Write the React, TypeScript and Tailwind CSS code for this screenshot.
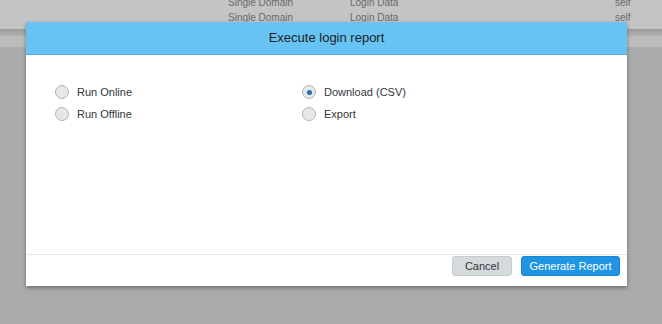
import React, { useState } from 'react';

const Radio: React.FC<{ label: string; checked: boolean; onClick: () => void }> = ({ label, checked, onClick }) => (
  <button onClick={onClick} className="flex items-center h-[22px] text-left">
    <span className="w-[14px] h-[14px] rounded-full border border-[#b3b3b3] bg-[#e5e7ea] flex items-center justify-center">
      {checked && <span className="w-[5px] h-[5px] rounded-full bg-[#2a6ab0]" />}
    </span>
    <span className="ml-[8px] text-[11px] text-[#32363a]">{label}</span>
  </button>
);

export default function App() {
  const [run, setRun] = useState<string | null>(null);
  const [out, setOut] = useState('csv');

  return (
    <div className="relative w-[662px] h-[324px] overflow-hidden bg-[#aaabad] font-['Liberation_Sans',Arial,sans-serif]">
      {/* Background page */}
      <div className="h-[29px] bg-[#c4c4c4] relative text-[10px] text-[#6a6a6a]">
        <div className="absolute left-[228px] top-[-5px]">Single Domain</div>
        <div className="absolute left-[350px] top-[-5px]">Login Data</div>
        <div className="absolute left-[615px] top-[-5px]">self</div>
        <div className="absolute left-[228px] top-[10px]">Single Domain</div>
        <div className="absolute left-[350px] top-[10px]">Login Data</div>
        <div className="absolute left-[615px] top-[10px]">self</div>
      </div>
      <div className="h-[7px] bg-gradient-to-b from-[#9c9c9c] to-[#b0b0b0]" />
      <div className="h-[11px] bg-[#bcbcbc]" />

      {/* Dialog */}
      <div className="absolute left-[26px] top-[22px] w-[601px] h-[264px] bg-white shadow-[0_2px_4px_rgba(0,0,0,0.35)] flex flex-col">
        <div className="h-[33px] bg-[#67c3f3] border-b border-[#5aa8d4] flex items-center justify-center text-[13px] text-[#1e1e1e]">
          Execute login report
        </div>
        <div className="flex-1 flex pl-[29px] pt-[26px]">
          <div className="w-[247px] flex flex-col">
            <Radio label="Run Online" checked={run === 'online'} onClick={() => setRun('online')} />
            <Radio label="Run Offline" checked={run === 'offline'} onClick={() => setRun('offline')} />
          </div>
          <div className="flex flex-col">
            <Radio label="Download (CSV)" checked={out === 'csv'} onClick={() => setOut('csv')} />
            <Radio label="Export" checked={out === 'export'} onClick={() => setOut('export')} />
          </div>
        </div>
        <div className="h-[32px] border-t border-[#e5e5e5] flex justify-end gap-[9px] pr-[7px] pt-[1px]">
          <button className="w-[60px] h-[20px] rounded-[3px] bg-[#d5dadd] border border-[#c6cbce] text-[11px] text-[#32363a]">
            Cancel
          </button>
          <button className="w-[99px] h-[20px] rounded-[3px] bg-[#1f95e3] border border-[#1a86cf] text-[11px] text-white">
            Generate Report
          </button>
        </div>
      </div>
    </div>
  );
}
